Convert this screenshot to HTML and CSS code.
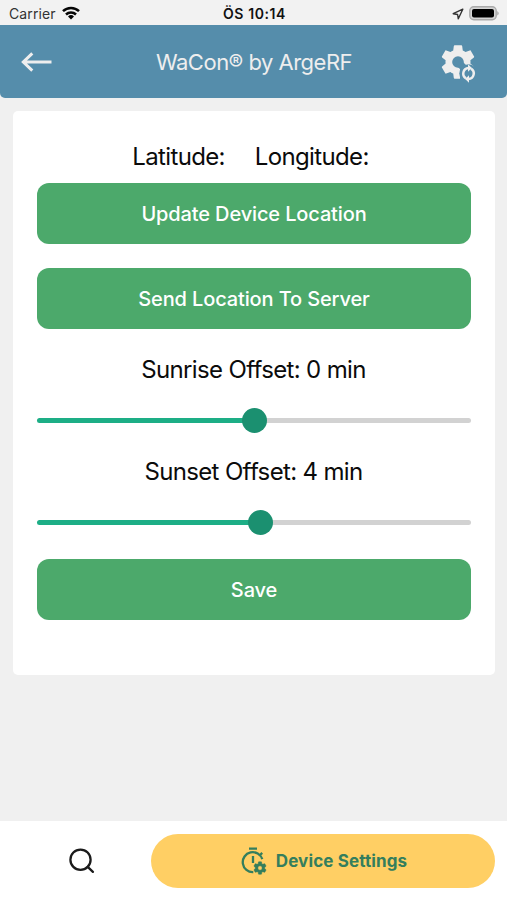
FILE: index.html
```html
<!DOCTYPE html>
<html lang="en">
<head>
<meta charset="utf-8">
<title>WaCon</title>
<link rel="stylesheet" href="styles.css">
</head>
<body>
<svg width="0" height="0" class="defs" aria-hidden="true">
  <symbol id="cog" viewBox="0 0 24 24"><path d="M12,15.5A3.5,3.5 0 0,1 8.5,12A3.5,3.5 0 0,1 12,8.5A3.5,3.5 0 0,1 15.5,12A3.5,3.5 0 0,1 12,15.5M19.43,12.97C19.47,12.65 19.5,12.33 19.5,12C19.5,11.67 19.47,11.34 19.43,11L21.54,9.37C21.73,9.22 21.78,8.95 21.66,8.73L19.66,5.27C19.54,5.05 19.27,4.96 19.05,5.05L16.56,6.05C16.04,5.66 15.5,5.32 14.87,5.07L14.5,2.42C14.46,2.18 14.25,2 14,2H10C9.75,2 9.54,2.18 9.5,2.42L9.13,5.07C8.5,5.32 7.96,5.66 7.44,6.05L4.95,5.05C4.73,4.96 4.46,5.05 4.34,5.27L2.34,8.73C2.21,8.95 2.27,9.22 2.46,9.37L4.57,11C4.53,11.34 4.5,11.67 4.5,12C4.5,12.33 4.53,12.65 4.57,12.97L2.46,14.63C2.27,14.78 2.21,15.05 2.34,15.27L4.34,18.73C4.46,18.95 4.73,19.03 4.95,18.95L7.44,17.94C7.96,18.34 8.5,18.68 9.13,18.93L9.5,21.58C9.54,21.82 9.75,22 10,22H14C14.25,22 14.46,21.82 14.5,21.58L14.87,18.93C15.5,18.67 16.04,18.34 16.56,17.94L19.05,18.95C19.27,19.03 19.54,18.95 19.66,18.73L21.66,15.27C21.78,15.05 21.73,14.78 21.54,14.63L19.43,12.97Z"/></symbol>
</svg>
<div class="status">
  <div class="carrier"><span>Carrier</span>
    <svg width="18" height="14" viewBox="0 0 18 14"><g fill="none" stroke="#050505" stroke-width="2.5"><path d="M1 5.2a11.4 11.4 0 0 1 16 0"/><path d="M4 8.5a7.2 7.2 0 0 1 10 0"/></g><path d="M9 13.6 6 10.5a4.3 4.3 0 0 1 6 0z" fill="#050505"/></svg>
  </div>
  <span class="time">ÖS 10:14</span>
  <div class="indicators">
    <svg width="12" height="12" viewBox="0 0 12 12"><path d="M10.8 1.2 1.2 5.7l4.4.8.7 4.3z" fill="none" stroke="#333" stroke-width="1.4" stroke-linejoin="round"/></svg>
    <svg width="31" height="15" viewBox="0 0 31 15"><rect x=".8" y=".8" width="26.4" height="12.9" rx="4" fill="#d5d5d5" stroke="#aaa" stroke-width="1.4"/><rect x="3" y="3" width="22" height="8.5" rx="2" fill="#000"/><path d="M28.4 5q2.4 2.3 0 4.6z" fill="#999"/></svg>
  </div>
</div>
<header class="bar">
  <svg width="32" height="22" viewBox="0 0 32 22"><path d="M31.5 11H3.5M12.3 2.3 3.3 11l9 8.7" fill="none" stroke="#eee" stroke-width="3"/></svg>
  <h1>WaCon® by ArgeRF</h1>
  <svg width="40" height="42" viewBox="0 0 40 42">
    <mask id="cut" maskUnits="userSpaceOnUse" x="0" y="0" width="40" height="42"><rect width="40" height="42" fill="#fff"/><circle cx="29.5" cy="32.5" r="9.2" fill="#000"/><path d="M17.5 25 21 28v13h10V28l-7-7z" fill="#000"/></mask>
    <g mask="url(#cut)"><use href="#cog" x="-1" y="1" width="40" height="40" fill="#eee"/></g>
    <g fill="none" stroke="#eee" stroke-width="2.5"><path d="M27 37.4a5.6 5.6 0 0 1 2.5-10.4"/><path d="M32 27.6a5.6 5.6 0 0 1-2.5 10.4"/></g>
    <path d="M29 23.2v7.6l3.9-3.8zM30 41.8v-7.6L26.1 38z" fill="#eee"/>
  </svg>
</header>
<main class="card">
  <div class="coords"><span>Latitude:</span><span>Longitude:</span></div>
  <button class="btn">Update Device Location</button>
  <button class="btn second">Send Location To Server</button>
  <div class="label sunrise">Sunrise Offset: 0 min</div>
  <div class="slider"><i class="fill" style="width:50%"></i><i class="knob"></i><i class="rest"></i></div>
  <div class="label sunset">Sunset Offset: 4 min</div>
  <div class="slider"><i class="fill" style="width:51.5%"></i><i class="knob"></i><i class="rest"></i></div>
  <button class="btn save">Save</button>
</main>
<nav class="tabs">
  <div class="search"><svg width="28" height="28" viewBox="0 0 28 28"><g fill="none" stroke="#1b1b1b" stroke-width="2.3" stroke-linecap="round"><circle cx="12.5" cy="12.7" r="10.1"/><path d="m19.7 19.9 5.2 5"/></g></svg></div>
  <div class="pill">
    <svg width="26" height="28" viewBox="0 0 26 28"><g fill="none" stroke="#347e5d" stroke-width="2.3"><path d="M8 1.7h8M12 9v7M18.6 8.5l2.6-2.6M12.3 25.2A10 10 0 1 1 21.3 12.2"/></g><use href="#cog" x="11.5" y="13.5" width="15" height="15" fill="#347e5d" stroke="#347e5d" stroke-width=".8"/></svg>
    <span>Device Settings</span>
  </div>
</nav>
</body>
</html>
```

FILE: styles.css
```css
* { box-sizing: border-box; }
body {
  margin: 0;
  height: 900px;
  display: flex;
  flex-direction: column;
  background: #f0f0f0;
  font-family: Inter, "Liberation Sans", sans-serif;
  color: #0b0b0b;
  overflow: hidden;
}
.defs { position: absolute; }
span { white-space: nowrap; }
.status {
  height: 25px;
  flex: none;
  display: grid;
  grid-template-columns: 1fr auto 1fr;
  align-items: center;
  padding: 2px 7px 0 9px;
  background: #f2f2f2;
  font-size: 14px;
  line-height: 20px;
}
.carrier { display: flex; align-items: center; gap: 6px; color: #333; letter-spacing: 0.1px; }
.carrier svg { margin-top: -2px; }
.time { font-weight: 600; font-size: 14px; letter-spacing: 0.6px; color: #111; }
.indicators { display: flex; justify-content: flex-end; align-items: center; gap: 5px; }
.bar {
  height: 73px;
  flex: none;
  display: flex;
  align-items: center;
  padding: 0 28px 0 20px;
  background: #558dab;
  border-radius: 0 0 5px 5px;
}
.bar h1 {
  flex: 1;
  margin: 0;
  padding-left: 17px;
  text-align: center;
  font-size: 22px;
  font-weight: 400;
  line-height: 28px;
  letter-spacing: -0.5px;
  color: #eee;
}
.card {
  margin: 13px 12px 0 13px;
  height: 564px;
  flex: none;
  padding: 30px 24px 0;
  background: #fff;
  border-radius: 5px;
  display: flex;
  flex-direction: column;
}
.coords {
  height: 32px;
  display: flex;
  justify-content: center;
  gap: 30px;
  font-size: 24px;
  line-height: 32px;
  padding-right: 7px;
  letter-spacing: -0.65px;
}
.btn {
  height: 61px;
  margin: 10px 0 0;
  padding: 0;
  border: 0;
  border-radius: 12px;
  background: #4ca96b;
  color: #fff;
  font: 500 20px/28px Inter, "Liberation Sans", sans-serif;
  letter-spacing: -0.13px;
}
.second { margin-top: 24px; }
.label { height: 32px; font-size: 24px; line-height: 32px; text-align: center; letter-spacing: -0.65px; padding-right: 1px; }
.sunrise { margin-top: 25px; }
.sunset { margin-top: 23px; }
.slider { height: 26px; margin-top: 21px; display: flex; align-items: center; }
.fill { height: 5px; background: #1dae86; border-radius: 3px 0 0 3px; }
.knob { width: 25px; height: 25px; margin: 0 -12.5px; flex: none; border-radius: 50%; background: #1b9070; z-index: 1; }
.rest { flex: 1; height: 5px; background: #d2d2d2; border-radius: 0 3px 3px 0; }
.save { margin-top: 24px; }
.tabs {
  margin-top: auto;
  height: 79px;
  flex: none;
  display: flex;
  align-items: flex-start;
  padding: 13px 12px 0;
  background: #fff;
}
.search { width: 139px; height: 54px; display: flex; align-items: center; justify-content: center; }
.search svg { display: block; }
.pill {
  flex: 1;
  height: 54px;
  display: flex;
  align-items: center;
  justify-content: center;
  gap: 9px;
  padding-left: 2px;
  border-radius: 27px;
  background: #ffcf64;
  color: #347e5d;
  font-size: 17px;
  font-weight: 700;
  letter-spacing: 0.12px;
}
```
